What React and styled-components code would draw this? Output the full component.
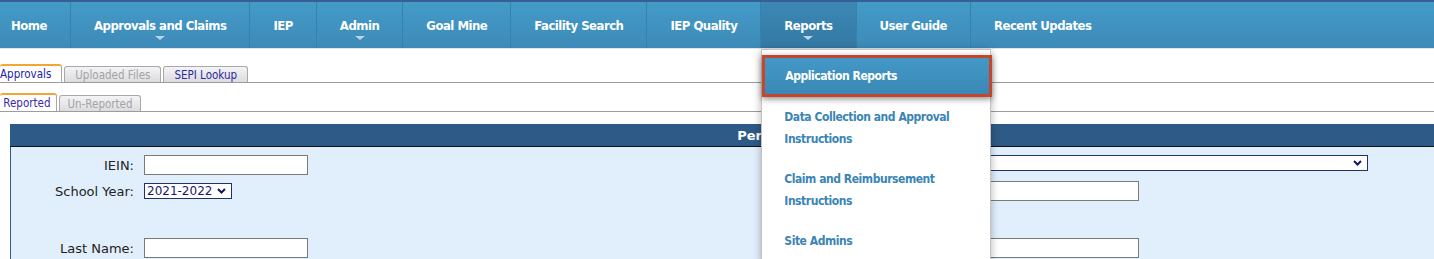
import React from "react";
import styled, { createGlobalStyle, css } from "styled-components";

const Global = createGlobalStyle`
  html, body { margin: 0; padding: 0; background: #fff; overflow: hidden; }
  * { box-sizing: border-box; }
`;

const Page = styled.div`
  width: 1434px;
  font-family: "DejaVu Sans", Verdana, sans-serif;
`;

const TopStrip = styled.div`
  height: 2px;
  background: #385f93;
`;

const NavBar = styled.nav`
  display: flex;
  height: 46px;
  background: linear-gradient(#449bc8, #3d8ab8);
  border-bottom: 1px solid #e4e4e4;
  box-sizing: content-box;
`;

const narrow = css`
  font-family: "DejaVu Sans Condensed", "Liberation Sans", sans-serif;
  font-weight: bold;
`;

const NavItem = styled.div`
  position: relative;
  display: flex;
  align-items: center;
  padding: 0 23px 0 ${(p) => (p.$first ? "11px" : "23px")};
  border-left: ${(p) => (p.$first ? "none" : "1px solid #3781ad")};
  ${narrow};
  font-size: 13px;
  letter-spacing: -0.5px;
  color: #fff;
  white-space: nowrap;
  ${(p) =>
    p.$active &&
    css`
      background: linear-gradient(#3b88b5, #3479a4);
    `}
  ${(p) =>
    p.$caret &&
    css`
      &::after {
        content: "";
        position: absolute;
        left: 50%;
        bottom: 8px;
        margin-left: -5px;
        border-left: 5px solid transparent;
        border-right: 5px solid transparent;
        border-top: 4px solid #b9d7ec;
      }
    `}
`;

const Menu = styled.div`
  position: absolute;
  top: 100%;
  left: 0;
  width: 230px;
  margin-top: 1px;
  padding: 5px 0 0;
  background: #fff;
  border: 1px solid #c4c4c4;
  box-shadow: 0 2px 8px rgba(0, 0, 0, 0.3);
  z-index: 10;
`;

const MenuItem = styled.div`
  ${narrow};
  font-size: 12px;
  letter-spacing: -0.45px;
  line-height: 22px;
  white-space: normal;
  padding: 9px 22px;
  color: #3a85b5;
  ${(p) =>
    p.$selected &&
    css`
      margin-right: -2px;
      padding: 7px 20px;
      color: #fff;
      background: linear-gradient(#4499c6, #3a88b6);
      border: 3px solid #c3472d;
      box-shadow: 0 2px 6px rgba(0, 0, 0, 0.45);
    `}
`;

const Tabs = styled.div`
  display: flex;
  align-items: flex-end;
  gap: 2px;
  border-bottom: 1px solid #9c9c9c;
  margin-top: ${(p) => p.$mt}px;
`;

const Tab = styled.div`
  height: ${(p) => (p.$active ? 18 : 16)}px;
  display: flex;
  align-items: center;
  padding: 0 ${(p) => p.$pad}px 0 ${(p) => (p.$first ? 0 : p.$pad)}px;
  font-family: "DejaVu Sans Condensed", Tahoma, "DejaVu Sans", sans-serif;
  font-size: 11.5px;
  border: 1px solid #a9a9a9;
  border-bottom: none;
  border-left: ${(p) => (p.$first ? "none" : "1px solid #a9a9a9")};
  border-radius: 3px 3px 0 0;
  color: ${(p) => p.$color};
  background: ${(p) =>
    p.$active ? "#fff" : "linear-gradient(#f4f4f6, #dcdce0)"};
  ${(p) =>
    p.$active &&
    css`
      border-top: 2px solid #f2a735;
    `}
`;

const Panel = styled.section`
  width: 1560px;
  margin: 12px 0 0 10px;
`;

const PanelHeader = styled.div`
  height: 23px;
  background: #2e5a87;
  border-bottom: 1px solid #111;
  color: #fff;
  font-weight: bold;
  font-size: 13px;
  display: flex;
  align-items: center;
  justify-content: center;
`;

const PanelBody = styled.div`
  background: #e1effd;
  border-left: 1px solid #2e5a87;
  padding: 8px 0 10px;
  display: grid;
  grid-template-columns: 123px 610px 201px 1fr;
  grid-template-rows: 20px 20px 25px 20px;
  column-gap: 10px;
  row-gap: 6px;
  align-items: center;
`;

const Label = styled.label`
  text-align: right;
  font-size: 13px;
  color: #222;
  white-space: nowrap;
`;

const Input = styled.div`
  width: 164px;
  height: 20px;
  background: #fff;
  border: 1px solid #7a7a7a;
`;

const SelectBox = styled.div`
  width: ${(p) => p.$w}px;
  height: 16px;
  display: flex;
  align-items: center;
  justify-content: space-between;
  padding: 0 5px 0 2px;
  background: #fff;
  border: 1px solid #1f3466;
  font-size: 12px;
  color: #17176b;
  align-self: ${(p) => p.$align || "center"};
`;

const Chevron = () => (
  <svg width="9" height="6" viewBox="0 0 9 6">
    <path d="M1 1 L4.5 4.5 L8 1" fill="none" stroke="#14185a" strokeWidth="2" />
  </svg>
);

const navItems = [
  { t: "Home", first: true },
  { t: "Approvals and Claims", caret: true },
  { t: "IEP" },
  { t: "Admin", caret: true },
  { t: "Goal Mine" },
  { t: "Facility Search" },
  { t: "IEP Quality" },
  { t: "Reports", caret: true, active: true, menu: true },
  { t: "User Guide" },
  { t: "Recent Updates" },
];

export default function App() {
  return (
    <Page>
      <Global />
      <TopStrip />
      <NavBar>
        {navItems.map((n) => (
          <NavItem key={n.t} $first={n.first} $caret={n.caret} $active={n.active}>
            {n.t}
            {n.menu && (
              <Menu>
                <MenuItem $selected>Application Reports</MenuItem>
                <MenuItem>Data Collection and Approval Instructions</MenuItem>
                <MenuItem>Claim and Reimbursement Instructions</MenuItem>
                <MenuItem>Site Admins</MenuItem>
              </Menu>
            )}
          </NavItem>
        ))}
      </NavBar>

      <Tabs $mt={15}>
        <Tab $first $active $pad={10} $color="#2424a8">Approvals</Tab>
        <Tab $pad={10} $color="#a3a3a3">Uploaded Files</Tab>
        <Tab $pad={10} $color="#2a2aa0">SEPI Lookup</Tab>
      </Tabs>
      <Tabs $mt={10}>
        <Tab $first $active $pad={6} $color="#3a2aa8">&nbsp;Reported</Tab>
        <Tab $pad={7} $color="#a3a3a3">Un-Reported</Tab>
      </Tabs>

      <Panel>
        <PanelHeader>Person Search</PanelHeader>
        <PanelBody>
          <Label>IEIN:</Label>
          <Input />
          <Label />
          <SelectBox $w={393} $align="start">
            <span />
            <Chevron />
          </SelectBox>

          <Label>School Year:</Label>
          <SelectBox $w={88}>
            <span>2021-2022</span>
            <Chevron />
          </SelectBox>
          <Label />
          <Input />

          <span />
          <span />
          <span />
          <span />

          <Label>Last Name:</Label>
          <Input />
          <Label />
          <Input />
        </PanelBody>
      </Panel>
    </Page>
  );
}
